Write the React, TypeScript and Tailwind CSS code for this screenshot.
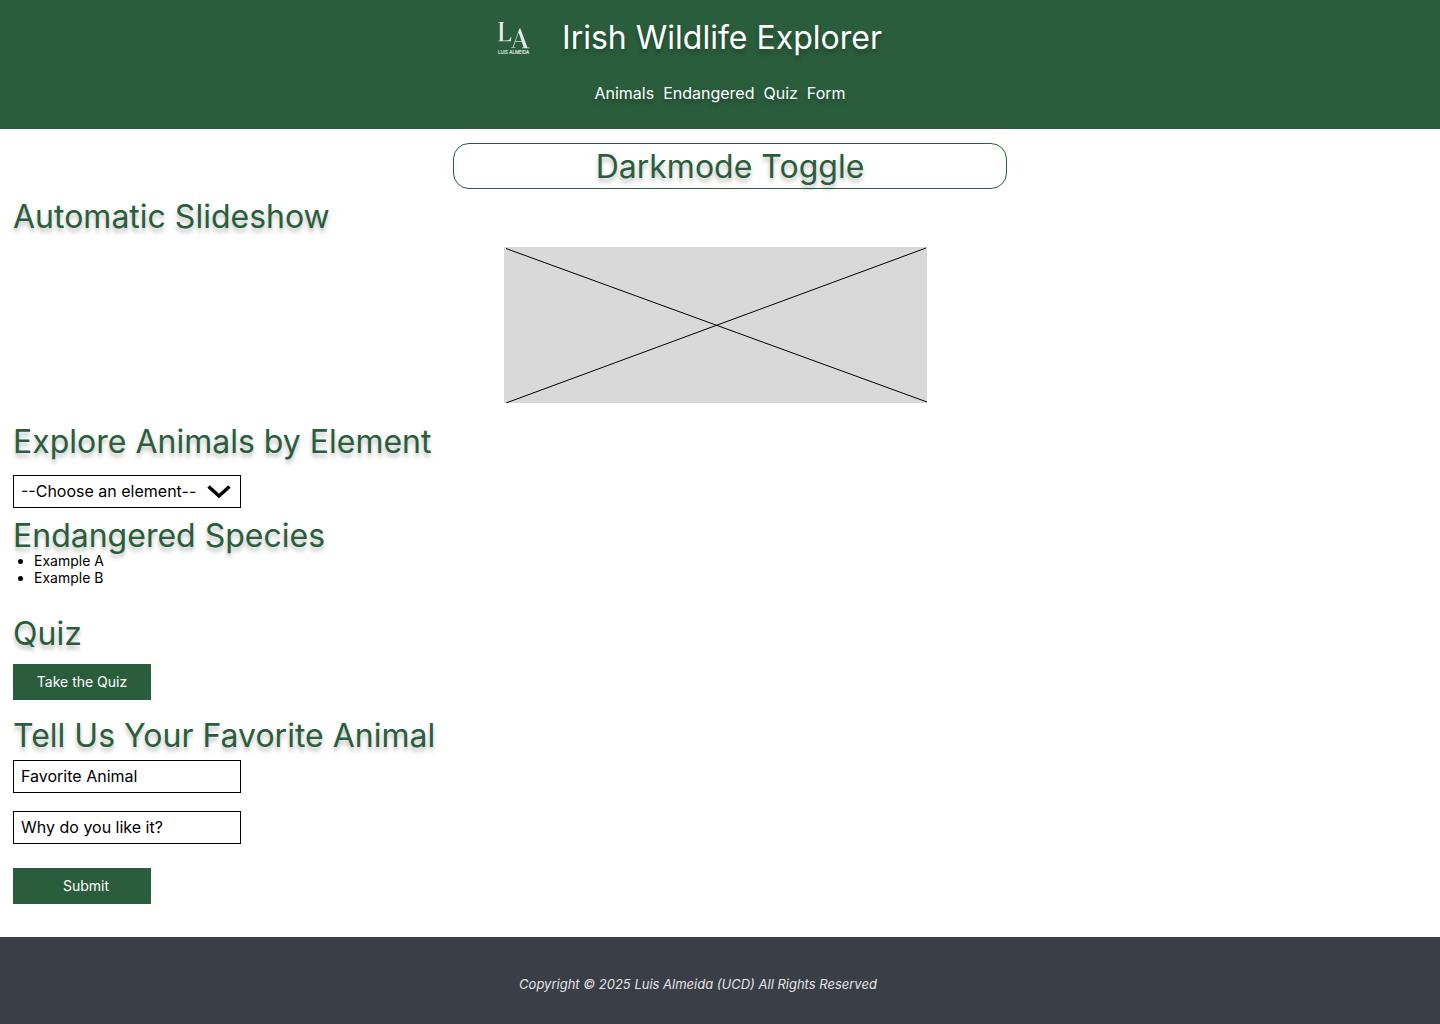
import type { ReactNode } from "react";

const shadow = "[text-shadow:0_4px_4px_rgba(0,0,0,0.25)]";
const field = "h-[33px] w-[228px] border border-black px-[7px] pb-0.5 text-base placeholder:text-black";

function Heading({ children }: { children: ReactNode }) {
  return <h2 className={`text-[32px] leading-10 text-[#2a5d3c] ${shadow}`}>{children}</h2>;
}

function Logo() {
  return (
    <svg viewBox="0 0 64 64" className="size-8 overflow-visible" role="img" aria-label="Luis Almeida">
      <g fill="#e3e6e3" transform="scale(2)">
        <path d="M0.500 0h5.500v.7H4.900V18.400h3.700c2.600 0 3.500-1.200 4-3.400h.7l-.3 4.200H0.500v-.7h1.300V.7H0.500z" />
        <path d="M21.400 6.500h1l7 18.900H31.500v.8h-7.500v-.8h1.700l-2-5.700h-6.300l-2 5.700h2v.7H13v-.7h1.600zM20.600 10.500l-3 8.500h6z" />
      </g>
      <text x="0" y="64" className="fill-white font-[Inter] text-[9px] font-medium">
        LUIS ALMEIDA
      </text>
    </svg>
  );
}

const links = ["Animals", "Endangered", "Quiz", "Form"];

export default function App() {
  return (
    <div className="flex min-h-screen flex-col bg-white font-[Inter,sans-serif] text-black">
      <header className="flex flex-col items-center bg-[#2a5d3c] pt-[18px] pb-6 text-white">
        <div className="flex items-center justify-center pr-15">
          <Logo />
          <h1 className={`ml-8 text-[32px] leading-10 ${shadow}`}>Irish Wildlife Explorer</h1>
        </div>
        <nav className="mt-[23px] flex gap-[9px]">
          {links.map((l) => (
            <a key={l} href={`#${l.toLowerCase()}`} className={`text-base ${shadow}`}>
              {l}
            </a>
          ))}
        </nav>
      </header>

      <main className="flex flex-1 flex-col px-[13px] pt-3.5 pb-8">
        <div className="flex justify-center pl-5">
          <button
            type="button"
            className={`w-full max-w-[554px] rounded-2xl border border-[#2a5d3c] pt-[3px] pb-px text-[32px] leading-10 text-[#2a5d3c] ${shadow}`}
          >
            Darkmode Toggle
          </button>
        </div>

        <section className="mt-2">
          <Heading>Automatic Slideshow</Heading>
          <div className="mt-2.5 flex justify-center pr-2.5">
            <svg viewBox="0 0 423 156" className="w-full max-w-[423px]" role="img" aria-label="Slide placeholder">
              <rect width="423" height="156" fill="#d9d9d9" />
              <path d="M2 1.500L423 155M2 156L422 1" stroke="#000" fill="none" />
            </svg>
          </div>
        </section>

        <section id="animals" className="mt-[19px]">
          <Heading>
            <label htmlFor="element">Explore Animals by Element</label>
          </Heading>
          <div className="relative mt-[13px] w-[228px]">
            <select
              id="element"
              className="block h-[33px] w-full appearance-none border border-black bg-white pb-0.5 pl-[7px] text-base"
            >
              <option>--Choose an element--</option>
            </select>
            <svg
              viewBox="0 0 24 14"
              className="pointer-events-none absolute top-2.5 right-2.5 h-3.5 w-6"
              aria-hidden="true"
            >
              <path d="M1.500 1.500L12 11L22.500 1.500" fill="none" stroke="#000" strokeWidth="3.500" />
            </svg>
          </div>
        </section>

        <section id="endangered" className="mt-2">
          <Heading>Endangered Species</Heading>
          <ul className="-mt-1 list-disc pl-[21px] text-sm leading-[17px]">
            <li>Example A</li>
            <li>Example B</li>
          </ul>
        </section>

        <section id="quiz" className="mt-7">
          <Heading>Quiz</Heading>
          <button type="button" className="mt-2.5 block h-9 w-[138px] bg-[#2a5d3c] text-sm text-white">
            Take the Quiz
          </button>
        </section>

        <section id="form" className="mt-4">
          <Heading>Tell Us Your Favorite Animal</Heading>
          <form className="mt-1 flex flex-col items-start" onSubmit={(e) => e.preventDefault()}>
            <input aria-label="Favorite Animal" placeholder="Favorite Animal" className={field} />
            <input
              aria-label="Why do you like it?"
              placeholder="Why do you like it?"
              className={`mt-[18px] ${field}`}
            />
            <button type="submit" className="mt-6 h-9 w-[138px] bg-[#2a5d3c] pl-2 text-sm text-white">
              Submit
            </button>
          </form>
        </section>
      </main>

      <footer className="bg-[#3a3e47] pt-[37px] pb-[30px] pr-11 text-center text-[13px] leading-5 text-[#e4e4e6] italic">
        Copyright © 2025 Luis Almeida (UCD) All Rights Reserved
      </footer>
    </div>
  );
}
